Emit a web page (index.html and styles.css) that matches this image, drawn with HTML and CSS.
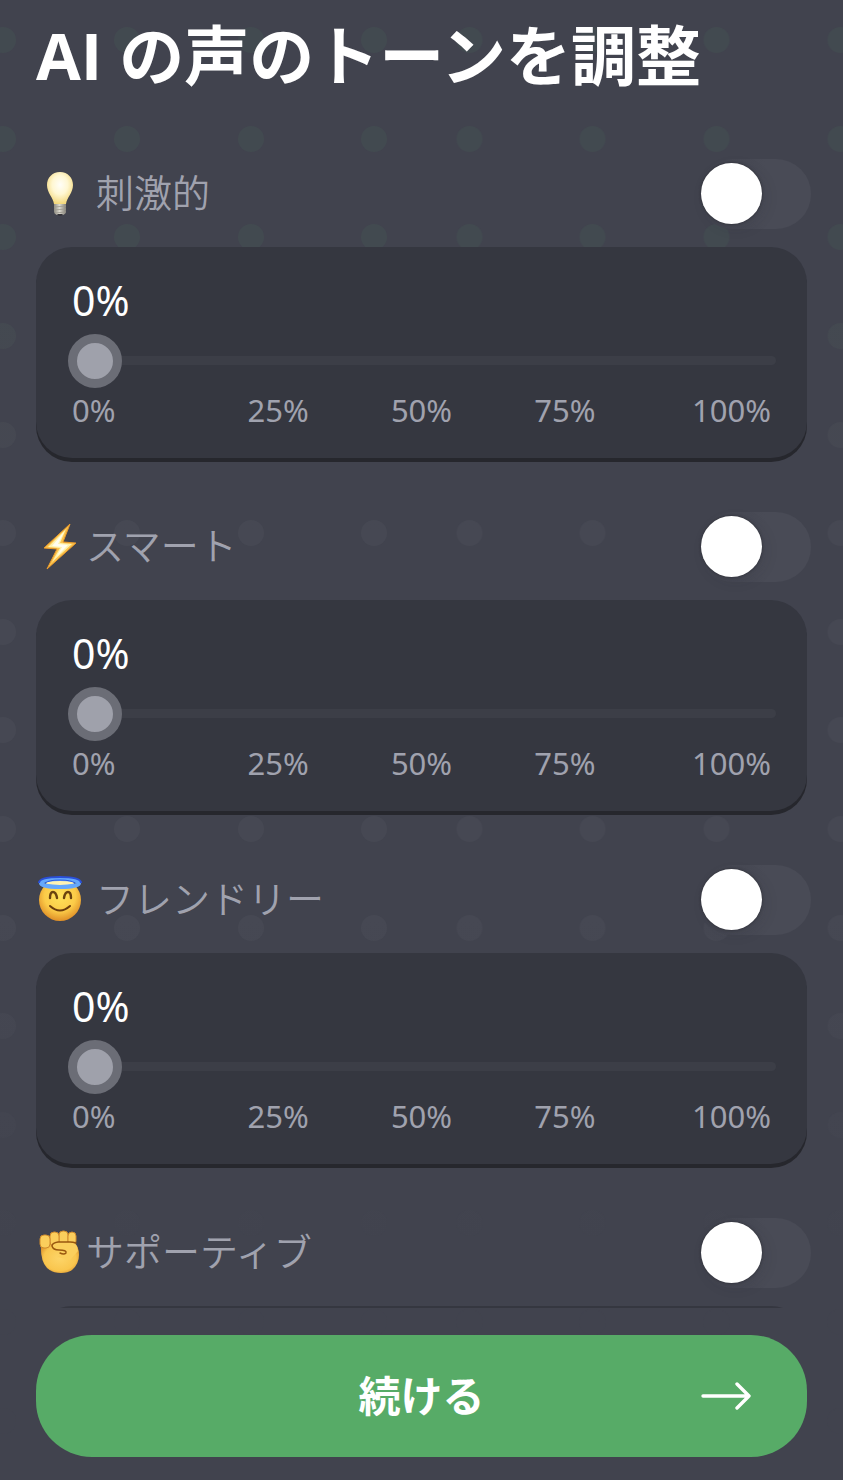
FILE: index.html
```
<!DOCTYPE html>
<html lang="ja">
<head>
    <meta charset="UTF-8">
    <meta name="viewport" content="width=device-width, initial-scale=1.0">
    <title>AI の声のトーンを調整</title>
    <link rel="stylesheet" href="styles.css">
</head>
<body>

<!-- Dotted background, one half mirrored onto the other -->
<div class="dots" aria-hidden="true">
    <svg class="dots-half">
        <defs>
            <pattern id="dot-grid" width="371" height="493" patternUnits="userSpaceOnUse" x="-10" y="0">
                <g fill="#fff">
                    <circle cx="13" cy="40" r="13"/><circle cx="137" cy="40" r="13"/><circle cx="261" cy="40" r="13"/>
                    <circle cx="13" cy="139" r="13"/><circle cx="137" cy="139" r="13"/><circle cx="261" cy="139" r="13"/>
                    <circle cx="13" cy="237" r="13"/><circle cx="137" cy="237" r="13"/><circle cx="261" cy="237" r="13"/>
                    <circle cx="13" cy="336" r="13"/><circle cx="137" cy="336" r="13"/><circle cx="261" cy="336" r="13"/>
                    <circle cx="13" cy="435" r="13"/><circle cx="137" cy="435" r="13"/><circle cx="261" cy="435" r="13"/>
                </g>
            </pattern>
            <mask id="dot-mask">
                <rect width="100%" height="100%" fill="url(#dot-grid)"/>
            </mask>
            <linearGradient id="dot-fade" x1="0" y1="0" x2="0" y2="1">
                <stop offset="0" stop-color="#424a50"/>
                <stop offset=".17" stop-color="#424a50"/>
                <stop offset=".26" stop-color="#454851"/>
                <stop offset=".36" stop-color="#464853"/>
                <stop offset=".62" stop-color="#464853"/>
                <stop offset=".84" stop-color="#41434e"/>
            </linearGradient>
        </defs>
        <rect width="100%" height="100%" fill="url(#dot-fade)" mask="url(#dot-mask)"/>
    </svg>
    <svg class="dots-half mirrored">
        <rect width="100%" height="100%" fill="url(#dot-fade)" mask="url(#dot-mask)"/>
    </svg>
</div>

<main class="tones">
    <h1>AI の声のトーンを調整</h1>

    <section class="tone">
        <div class="tone-header">
            <svg class="emoji" viewBox="0 0 48 48" aria-hidden="true">
                <defs>
                    <radialGradient id="bulb" cx=".5" cy=".4" r=".6">
                        <stop offset="0" stop-color="#fffef8"/>
                        <stop offset=".5" stop-color="#fff7d2"/>
                        <stop offset="1" stop-color="#f2d77c"/>
                    </radialGradient>
                    <linearGradient id="bulb-base">
                        <stop offset="0" stop-color="#8b8980"/>
                        <stop offset=".45" stop-color="#dddbd0"/>
                        <stop offset="1" stop-color="#817e76"/>
                    </linearGradient>
                </defs>
                <path d="M24 2C16 2 11 8 11 15c0 8 6 12 7 19h12c1-7 7-11 7-19C37 8 32 2 24 2z" fill="url(#bulb)"/>
                <path d="M18 34h12v8q0 2-3 3h-6q-3-1-3-3z" fill="url(#bulb-base)"/>
                <path d="M18 37l12-1M18 40l12-1M19 43l11-1" stroke="#9a978d" stroke-width=".8"/>
                <path d="M21 44h6q-1 2-3 2t-3-2z" fill="#35343a"/>
            </svg>
            <label class="tone-name spaced" for="tone-1">刺激的</label>
            <input class="switch" type="checkbox" role="switch" id="tone-1">
        </div>
        <div class="card">
            <output class="value" for="range-1">0%</output>
            <input class="slider" type="range" id="range-1" min="0" max="100" value="0" aria-label="刺激的">
            <div class="ticks"><span>0%</span><span>25%</span><span>50%</span><span>75%</span><span>100%</span></div>
        </div>
    </section>

    <section class="tone">
        <div class="tone-header">
            <svg class="emoji" viewBox="0 0 48 48" aria-hidden="true">
                <path d="M34 1L8 25l13 1-10 20 29-26-13-1z" fill="#fbc34c" stroke="#ea9a2b" stroke-width="1" stroke-linejoin="round"/>
                <path d="M30 6L12 24l12 1-8 14 20-18-12-1z" fill="#fff3ae"/>
                <path d="M28 9L16 23l10 1-5 9 11-11-10-1z" fill="#fffdf0"/>
            </svg>
            <label class="tone-name" for="tone-2">スマート</label>
            <input class="switch" type="checkbox" role="switch" id="tone-2">
        </div>
        <div class="card">
            <output class="value" for="range-2">0%</output>
            <input class="slider" type="range" id="range-2" min="0" max="100" value="0" aria-label="スマート">
            <div class="ticks"><span>0%</span><span>25%</span><span>50%</span><span>75%</span><span>100%</span></div>
        </div>
    </section>

    <section class="tone">
        <div class="tone-header">
            <svg class="emoji" viewBox="0 0 48 48" aria-hidden="true">
                <defs>
                    <radialGradient id="face" cx=".5" cy=".4" r=".62">
                        <stop offset="0" stop-color="#ffe25a"/>
                        <stop offset=".6" stop-color="#fbcb48"/>
                        <stop offset="1" stop-color="#dd8a25"/>
                    </radialGradient>
                </defs>
                <circle cx="24" cy="24" r="21" fill="url(#face)"/>
                <ellipse cx="24" cy="7" rx="14" ry="4" fill="#fff3b4"/>
                <ellipse cx="24" cy="7" rx="19" ry="4" fill="none" stroke="#65a8fb" stroke-width="4"/>
                <path d="M3 7C3 2 13 1 24 1s21 1 21 6" fill="none" stroke="#2a4fd8" stroke-width="2"/>
                <path d="M9 7q4-3 15-3t15 3" fill="none" stroke="#2b5be0" stroke-width="1"/>
                <path d="M14 22q0-6 3-6t4 6M28 22q1-6 4-6t3 6" fill="none" stroke="#6b430f" stroke-width="2.4" stroke-linecap="round"/>
                <path d="M14 30q10 9 20 0" fill="none" stroke="#6b3c0c" stroke-width="2" stroke-linecap="round"/>
            </svg>
            <label class="tone-name spaced" for="tone-3">フレンドリー</label>
            <input class="switch" type="checkbox" role="switch" id="tone-3">
        </div>
        <div class="card">
            <output class="value" for="range-3">0%</output>
            <input class="slider" type="range" id="range-3" min="0" max="100" value="0" aria-label="フレンドリー">
            <div class="ticks"><span>0%</span><span>25%</span><span>50%</span><span>75%</span><span>100%</span></div>
        </div>
    </section>

    <section class="tone">
        <div class="tone-header">
            <svg class="emoji" viewBox="0 0 48 48" aria-hidden="true">
                <defs>
                    <radialGradient id="fist" cx=".5" cy=".5" r=".6">
                        <stop offset="0" stop-color="#fdd569"/>
                        <stop offset=".7" stop-color="#f9c64e"/>
                        <stop offset="1" stop-color="#d98d29"/>
                    </radialGradient>
                </defs>
                <path d="M5 14h32q6 2 6 12 0 9-7 15-4 3-11 3-9 0-14-5-7-7-6-25z" fill="url(#fist)"/>
                <g fill="#fbce5c" stroke="#cf8a2c" stroke-width="1">
                    <rect x="23" y="2" width="9" height="14" rx="4"/>
                    <rect x="32" y="3" width="8" height="13" rx="4"/>
                    <rect x="14" y="3" width="9" height="14" rx="4"/>
                    <rect x="4" y="6" width="10" height="13" rx="4"/>
                </g>
                <path d="M16 18q0-5 7-5h12q7 1 7 9l-8 9-13-3 7-5q-12 0-12-5z" fill="#fbcf5d"/>
                <path d="M40 14q-3-1-6-1H22q-6 1-6 4 1 4 7 4 8 0 7 3-2 2-6 0" fill="none" stroke="#99570f" stroke-width="1.4" stroke-linecap="round"/>
            </svg>
            <label class="tone-name" for="tone-4">サポーティブ</label>
            <input class="switch" type="checkbox" role="switch" id="tone-4">
        </div>
        <div class="card collapsed"></div>
    </section>
</main>

<footer class="footer">
    <button class="continue" type="button">
        <span class="continue-text">続ける</span>
        <svg class="arrow" viewBox="0 0 52 28" aria-hidden="true">
            <path d="M3 14h46M37 2l12 12-12 12" fill="none" stroke="#fff" stroke-width="3.4" stroke-linecap="round" stroke-linejoin="round"/>
        </svg>
    </button>
</footer>

<script>
    // Keep the percentage above each slider in step with it
    document.querySelectorAll('.slider').forEach(function(slider) {
        slider.oninput = function() {
            slider.parentElement.querySelector('.value').textContent = slider.value + '%';
        };
    });
</script>

</body>
</html>
```
FILE: styles.css
```
* {
    box-sizing: border-box;
}

body {
    margin: 0;
    height: 100vh;
    display: flex;
    flex-direction: column;
    background-color: #41434e;
    color: #fff;
    font-family: "Open Sans", "Noto Sans CJK JP", sans-serif;
}

/* Background */
.dots {
    position: absolute;
    inset: 0;
    z-index: -1;
    display: flex;
    overflow: hidden;
}

.dots-half {
    width: 50%;
    height: 100%;
}

.mirrored {
    transform: scaleX(-1);
}

.tones {
    flex: 1;
    min-height: 0;
    padding: 0 36px;
    overflow: hidden;
}

h1 {
    margin: 0;
    padding: 11px 0 60px;
    font-size: 65px;
    line-height: 88px;
    font-weight: 700;
}

.tone {
    margin-bottom: 54px;
}

.tone-header {
    display: flex;
    align-items: center;
    height: 70px;
    margin: 0 -4px 18px 0;
}

.emoji {
    width: 48px;
    height: 48px;
}

.tone-name {
    margin-left: 2px;
    padding-bottom: 4px;
    color: #a0a2ae;
    font-size: 38px;
    line-height: 56px;
    font-weight: 350;
}

.spaced {
    margin-left: 12px;
}

/* Switch */
.switch {
    appearance: none;
    width: 114px;
    height: 70px;
    margin: 0 0 0 auto;
    padding: 4px;
    border-radius: 35px;
    background-color: #494b56;
    background-image: linear-gradient(90deg, #41434e, #494b56 60%);
    cursor: pointer;
}

.switch::before {
    content: "";
    display: block;
    width: 61px;
    height: 61px;
    border-radius: 50%;
    background-color: #fff;
    box-shadow: 0 0 3px #2b2c33, 4px 4px 14px rgba(40, 40, 48, 0.1);
}

.switch:checked {
    background: #57ab67;
}

.switch:checked::before {
    margin-left: auto;
}

/* Slider card */
.card {
    display: flex;
    flex-direction: column;
    padding: 24px 31px 28px 32px;
    border-radius: 36px;
    background-color: #353740;
    box-shadow: 0 4px 0 #26272d;
}

.collapsed {
    min-height: 120px;
}

.value {
    padding: 0 4px;
    font-family: "Noto Sans", sans-serif;
    font-size: 41px;
    line-height: 58px;
}

.slider {
    appearance: none;
    width: 100%;
    height: 54px;
    margin: 4px 0 3px;
    background: none;
    cursor: pointer;
}

.slider::-webkit-slider-runnable-track {
    height: 9px;
    border-radius: 5px;
    background-color: #3c3e47;
}

.slider::-webkit-slider-thumb {
    appearance: none;
    width: 54px;
    height: 54px;
    margin-top: -22px;
    border: 9px solid #6b6d76;
    border-radius: 50%;
    background-color: #9fa1ab;
}

.ticks {
    display: grid;
    grid-template-columns: repeat(5, 1fr);
    gap: 18px;
    padding: 0 5px 0 4px;
    color: #a0a2ae;
    font-family: "Noto Sans", sans-serif;
    font-size: 31px;
    line-height: 40px;
    text-align: center;
}

.ticks span:first-child {
    text-align: left;
}

.ticks span:last-child {
    text-align: right;
}

/* Footer */
.footer {
    padding: 27px 36px 23px;
}

.continue {
    display: grid;
    grid-template-columns: 1fr auto 1fr;
    align-items: center;
    width: 100%;
    height: 122px;
    padding: 0 55px;
    border: none;
    border-radius: 56px;
    background-color: #57ab67;
    color: #fff;
    font-family: inherit;
    font-size: 42px;
    font-weight: 700;
    cursor: pointer;
}

.continue:hover {
    background-color: #4e9e5e;
}

.continue-text {
    grid-column: 2;
    padding-bottom: 6px;
}

.arrow {
    width: 52px;
    height: 28px;
    justify-self: end;
}
```
